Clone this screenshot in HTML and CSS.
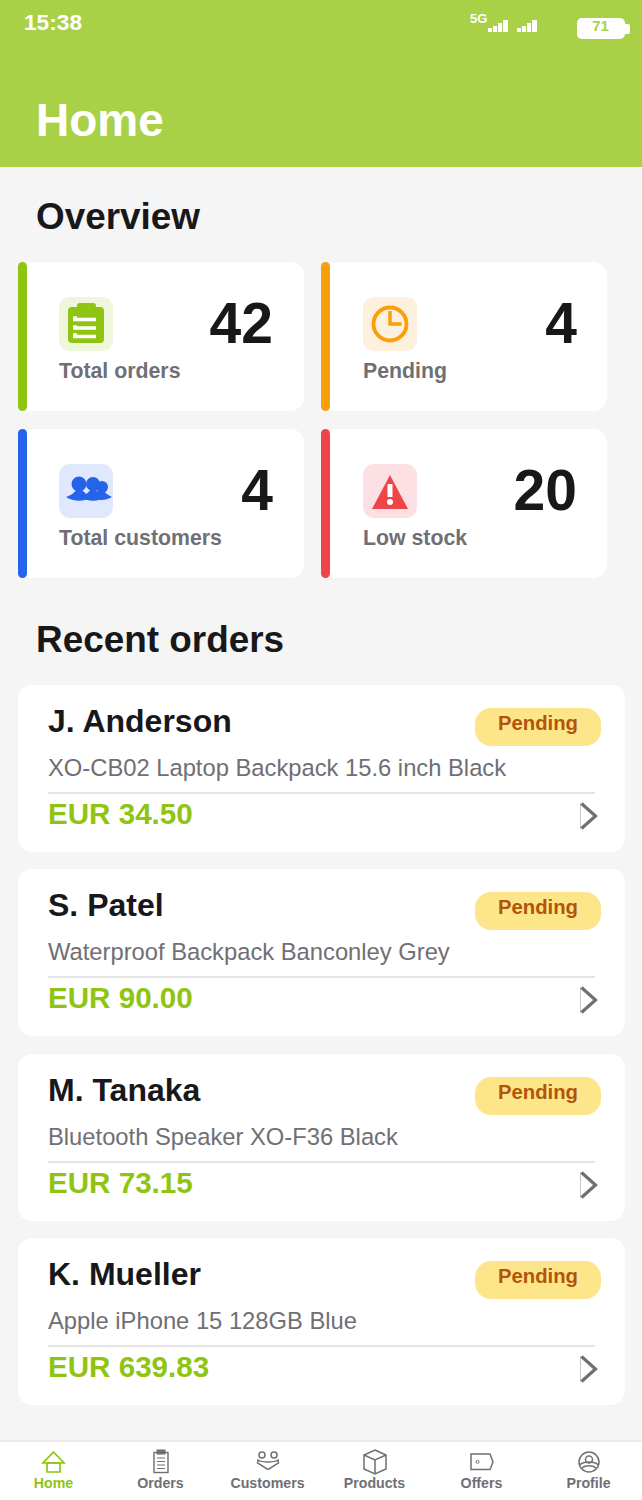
FILE: index.html
```html
<!DOCTYPE html>
<html lang="en">
<head>
    <meta charset="UTF-8">
    <title>Home</title>
    <link rel="stylesheet" href="styles.css">
</head>
<body>
<div class="top">
    <div class="status">
        <span class="time">15:38</span>
        <span class="net">5G</span>
        <svg class="signal" width="20" height="12" viewBox="0 0 20 12"><path d="M0 8h4v4H0zM5 6h4v6H5zM10 3h4v9h-4zM15 0h5v12h-5z"/></svg>
        <svg class="signal signal2" width="20" height="12" viewBox="0 0 20 12"><path d="M0 8h4v4H0zM5 6h4v6H5zM10 3h4v9h-4zM15 0h5v12h-5z"/></svg>
        <span class="battery"><span class="battery_level">71</span></span>
    </div>
    <h1>Home</h1>
</div>

<div class="main">
    <h2 class="overview_title">Overview</h2>
    <div class="stats">
        <div class="stat">
            <div class="bar bar_green"></div>
            <div class="stat_body">
                <div class="stat_top">
                    <div class="stat_icon icon_green">
                        <svg width="54" height="54" viewBox="0 0 54 54">
                            <rect x="9" y="10" width="36" height="36" rx="4" fill="#8fc412"/>
                            <rect x="18" y="6" width="19" height="8" rx="3" fill="#8fc412"/>
                            <path d="M14 22.500h23M14 31h23M14 39.500h23" stroke="#fff" stroke-width="3.400"/>
                            <path d="M14 20h4M14 29h4M14 37h4" stroke="#fff" stroke-width="1.500"/>
                        </svg>
                    </div>
                    <div class="stat_num">42</div>
                </div>
                <div class="stat_label">Total orders</div>
            </div>
        </div>
        <div class="stat">
            <div class="bar bar_amber"></div>
            <div class="stat_body">
                <div class="stat_top">
                    <div class="stat_icon icon_amber">
                        <svg width="54" height="54" viewBox="0 0 54 54">
                            <circle cx="27" cy="27" r="16.500" fill="none" stroke="#f8a00c" stroke-width="3.800"/>
                            <path d="M27 14v13h11.500" fill="none" stroke="#f8a00c" stroke-width="3.500"/>
                        </svg>
                    </div>
                    <div class="stat_num">4</div>
                </div>
                <div class="stat_label">Pending</div>
            </div>
        </div>
        <div class="stat">
            <div class="bar bar_blue"></div>
            <div class="stat_body">
                <div class="stat_top">
                    <div class="stat_icon icon_blue">
                        <svg width="54" height="54" viewBox="0 0 54 54" fill="#2563eb">
                            <circle cx="20" cy="20" r="7.500"/>
                            <circle cx="34" cy="20" r="7"/>
                            <circle cx="43" cy="23" r="6"/>
                            <path d="M7 33C13 31 16 28 18 25h4C25 28 28 31 33 33C25 38 15 38 7 33Z"/>
                            <path d="M21 33C27 31 30 28 32 25h4C39 28 42 31 47 33C39 38 29 38 21 33Z"/>
                            <path d="M33 33C37 31 39 28 41 26h3C46 29 49 31 53 33C46 37 39 37 33 33Z"/>
                        </svg>
                    </div>
                    <div class="stat_num">4</div>
                </div>
                <div class="stat_label">Total customers</div>
            </div>
        </div>
        <div class="stat">
            <div class="bar bar_red"></div>
            <div class="stat_body">
                <div class="stat_top">
                    <div class="stat_icon icon_red">
                        <svg width="54" height="54" viewBox="0 0 54 54">
                            <path d="M27 11L45 45H9Z" fill="#ef4549"/>
                            <rect x="24.500" y="20" width="5" height="13" fill="#fff"/>
                            <circle cx="27" cy="38" r="3" fill="#fff"/>
                        </svg>
                    </div>
                    <div class="stat_num">20</div>
                </div>
                <div class="stat_label">Low stock</div>
            </div>
        </div>
    </div>

    <h2 class="recent_title">Recent orders</h2>
    <div class="orders">
        <div class="order">
            <div class="order_head">
                <div class="order_name">J. Anderson</div>
                <div class="badge">Pending</div>
            </div>
            <div class="order_item">XO-CB02 Laptop Backpack 15.6 inch Black</div>
            <div class="order_foot">
                <div class="price">EUR 34.50</div>
                <svg class="chevron" width="18" height="28" viewBox="0 0 18 28"><path d="M1.500 1.500L15.500 14L1.500 26.500" fill="none" stroke="#6f6f75" stroke-width="3.200"/><path d="M0.500 1V27" stroke="#6f6f75" stroke-width="1" opacity="0.4"/></svg>
            </div>
        </div>
        <div class="order">
            <div class="order_head">
                <div class="order_name">S. Patel</div>
                <div class="badge">Pending</div>
            </div>
            <div class="order_item">Waterproof Backpack Banconley Grey</div>
            <div class="order_foot">
                <div class="price">EUR 90.00</div>
                <svg class="chevron" width="18" height="28" viewBox="0 0 18 28"><path d="M1.500 1.500L15.500 14L1.500 26.500" fill="none" stroke="#6f6f75" stroke-width="3.200"/><path d="M0.500 1V27" stroke="#6f6f75" stroke-width="1" opacity="0.4"/></svg>
            </div>
        </div>
        <div class="order">
            <div class="order_head">
                <div class="order_name">M. Tanaka</div>
                <div class="badge">Pending</div>
            </div>
            <div class="order_item">Bluetooth Speaker XO-F36 Black</div>
            <div class="order_foot">
                <div class="price">EUR 73.15</div>
                <svg class="chevron" width="18" height="28" viewBox="0 0 18 28"><path d="M1.500 1.500L15.500 14L1.500 26.500" fill="none" stroke="#6f6f75" stroke-width="3.200"/><path d="M0.500 1V27" stroke="#6f6f75" stroke-width="1" opacity="0.4"/></svg>
            </div>
        </div>
        <div class="order">
            <div class="order_head">
                <div class="order_name">K. Mueller</div>
                <div class="badge">Pending</div>
            </div>
            <div class="order_item">Apple iPhone 15 128GB Blue</div>
            <div class="order_foot">
                <div class="price">EUR 639.83</div>
                <svg class="chevron" width="18" height="28" viewBox="0 0 18 28"><path d="M1.500 1.500L15.500 14L1.500 26.500" fill="none" stroke="#6f6f75" stroke-width="3.200"/><path d="M0.500 1V27" stroke="#6f6f75" stroke-width="1" opacity="0.4"/></svg>
            </div>
        </div>
    </div>
</div>

<div class="nav">
    <div class="nav_item nav_active">
        <svg width="26" height="26" viewBox="0 0 26 26" fill="none" stroke="#8fc412" stroke-width="1.700">
            <path d="M12.500 3L23 14H2Z"/>
            <path d="M6 14h13v9H6z"/>
        </svg>
        <span>Home</span>
    </div>
    <div class="nav_item">
        <svg width="26" height="26" viewBox="0 0 26 26" fill="none" stroke="#6f6f75" stroke-width="1.400">
            <rect x="6" y="3.500" width="14" height="20"/>
            <rect x="8.500" y="0.500" width="9" height="5" fill="#6f6f75" stroke="none"/>
            <path d="M9 9h8M9 12.500h8M9 16h8M9 19.500h8" stroke-width="1"/>
        </svg>
        <span>Orders</span>
    </div>
    <div class="nav_item">
        <svg width="26" height="26" viewBox="0 0 26 26" fill="none" stroke="#6f6f75" stroke-width="1.500">
            <circle cx="7" cy="6" r="3"/>
            <circle cx="19" cy="6" r="3"/>
            <path d="M3 11C6 13 10 13 13 13C16 13 20 13 23 11L23.500 14L14 20H12L2.500 14Z"/>
        </svg>
        <span>Customers</span>
    </div>
    <div class="nav_item">
        <svg width="26" height="26" viewBox="0 0 26 26" fill="none" stroke="#6f6f75" stroke-width="1.500">
            <path d="M13 1L24 6V20L13 25L2 20V6Z"/>
            <path d="M2 6L13 11L24 6M13 11V25"/>
        </svg>
        <span>Products</span>
    </div>
    <div class="nav_item">
        <svg width="26" height="26" viewBox="0 0 26 26" fill="none" stroke="#6f6f75" stroke-width="1.500">
            <path d="M2 5H21L24 13L21 20.500H2Z"/>
            <circle cx="8.500" cy="12.800" r="1.500" stroke-width="1"/>
        </svg>
        <span>Offers</span>
    </div>
    <div class="nav_item">
        <svg width="26" height="26" viewBox="0 0 26 26" fill="none" stroke="#6f6f75" stroke-width="1.500">
            <circle cx="13" cy="13" r="10"/>
            <circle cx="13" cy="10.500" r="3.500"/>
            <path d="M4 16C7 12 19 12 22 16M6 19C9 16 17 16 20 19"/>
        </svg>
        <span>Profile</span>
    </div>
</div>
</body>
</html>
```

FILE: styles.css
```css
* {
    box-sizing: border-box;
}

body {
    display: flex;
    flex-direction: column;
    min-height: 1500px;
    margin: 0;
    background-color: #f5f5f5;
    font-family: "Liberation Sans", Arial, sans-serif;
    color: #18181b;
}

.top {
    height: 167px;
    padding: 9px 12px 0 24px;
    background-color: #a9d147;
    color: #ffffff;
}

.status {
    display: flex;
    align-items: flex-start;
    height: 85px;
}

.time {
    width: 446px;
    font-size: 22.700px;
    font-weight: bold;
    line-height: 26px;
}

.net {
    width: 18px;
    margin-top: 2px;
    font-size: 13px;
    font-weight: bold;
    line-height: 16px;
}

.signal {
    margin-top: 11px;
    fill: #ffffff;
}

.signal2 {
    margin-left: 9px;
}

.battery {
    position: relative;
    width: 48px;
    height: 21px;
    margin: 9px 0 0 40px;
    border-radius: 5px;
    background-color: #ffffff;
    color: #a9d147;
    text-align: center;
    font-size: 15px;
    font-weight: bold;
    line-height: 16px;
}

.battery::after {
    content: "";
    position: absolute;
    top: 6px;
    right: -5px;
    width: 5px;
    height: 10px;
    border-radius: 0 2px 2px 0;
    background-color: #ffffff;
}

.battery_level {
    display: block;
    padding-right: 1px;
}

h1 {
    margin: 0 0 0 12px;
    font-size: 46px;
    font-weight: bold;
    line-height: 52px;
}

.main {
    flex: 1;
    padding: 0 17px 0 18px;
}

h2 {
    margin: 0 0 0 18px;
    font-size: 36.900px;
    font-weight: bold;
    line-height: 42px;
}

.overview_title {
    padding-top: 29px;
    height: 95px;
}

.recent_title {
    padding-top: 41px;
    height: 107px;
}

.stats {
    display: grid;
    grid-template-columns: 286px 286px;
    gap: 18px 17px;
}

.stat {
    display: flex;
    height: 149px;
    border-radius: 14px;
    background-color: #ffffff;
}

.bar {
    flex: none;
    width: 9px;
    border-radius: 5px;
}

.bar_green { background-color: #8fc412; }
.bar_amber { background-color: #f8a00c; }
.bar_blue { background-color: #2563eb; }
.bar_red { background-color: #ef4549; }

.stat_body {
    flex: 1;
    padding: 35px 31px 0 32px;
}

.stat:nth-child(2n) .stat_body {
    padding-left: 33px;
    padding-right: 30px;
}

.stat_top {
    display: flex;
    justify-content: space-between;
}

.stat_icon {
    width: 54px;
    height: 54px;
    border-radius: 11px;
}

.stat_icon svg {
    display: block;
}

.icon_green { background-color: #eef6dc; }
.icon_amber { background-color: #fdf0dc; }
.icon_blue { background-color: #dfe8fc; }
.icon_red { background-color: #fde0e3; }

.stat_num {
    font-size: 57px;
    font-weight: bold;
    line-height: 52px;
}

.stat_label {
    margin-top: 6px;
    color: #6f6f75;
    font-size: 21.300px;
    font-weight: bold;
    line-height: 28px;
}

.orders {
    display: flex;
    flex-direction: column;
    gap: 17.400px;
}

.order {
    height: 167px;
    padding: 18px 30px 0;
    border-radius: 14px;
    background-color: #ffffff;
}

.order_head {
    display: flex;
    justify-content: space-between;
    align-items: flex-start;
    height: 50px;
}

.order_name {
    font-size: 32px;
    font-weight: bold;
    line-height: 36px;
}

.badge {
    width: 126px;
    height: 38px;
    margin: 5px -6px 0 0;
    border-radius: 16px;
    background-color: #fde68a;
    color: #b45309;
    text-align: center;
    font-size: 20.300px;
    font-weight: bold;
    line-height: 30px;
}

.order_item {
    height: 41px;
    border-bottom: 2px solid #e5e5e5;
    color: #6f6f75;
    font-size: 23.750px;
    line-height: 30px;
}

.order_foot {
    display: flex;
    justify-content: space-between;
    align-items: flex-start;
}

.price {
    color: #8fc412;
    font-size: 29.600px;
    font-weight: bold;
    line-height: 40px;
}

.chevron {
    margin: 8px -3px 0 0;
}

.nav {
    display: grid;
    grid-template-columns: repeat(6, 1fr);
    height: 60px;
    padding-top: 7px;
    border-top: 2px solid #ebebeb;
    background-color: #ffffff;
}

.nav_item {
    display: flex;
    flex-direction: column;
    align-items: center;
    color: #6f6f75;
    font-size: 14.200px;
    font-weight: bold;
    line-height: 16px;
}

.nav_active {
    color: #8fc412;
}
```
